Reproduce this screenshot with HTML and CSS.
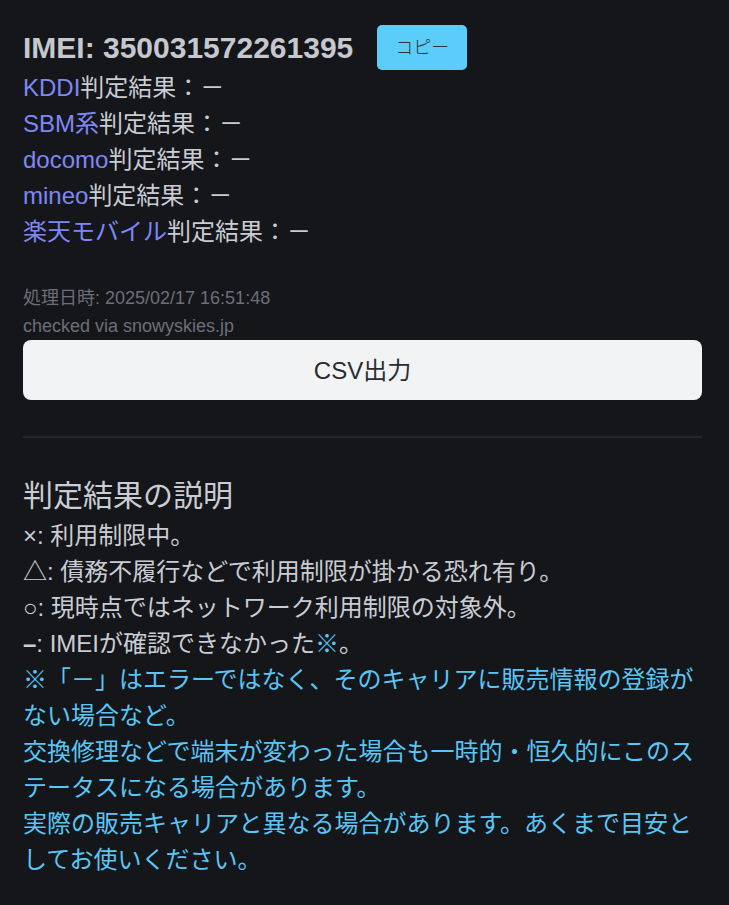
FILE: index.html
```html
<!DOCTYPE html>
<html lang="ja">
<head>
<meta charset="utf-8">
<title>IMEI判定結果</title>
<link rel="stylesheet" href="styles.css">
</head>
<body>
<main class="page">
  <div class="imei-row">
    <h1 class="imei">IMEI: 350031572261395</h1>
    <button class="copy" type="button">コピー</button>
  </div>
  <div class="results">
    <div class="line"><a class="carrier" href="#">KDDI</a>判定結果：－</div>
    <div class="line"><a class="carrier" href="#">SBM系</a>判定結果：－</div>
    <div class="line"><a class="carrier" href="#">docomo</a>判定結果：－</div>
    <div class="line"><a class="carrier" href="#">mineo</a>判定結果：－</div>
    <div class="line"><a class="carrier" href="#">楽天モバイル</a>判定結果：－</div>
  </div>
  <div class="meta">
    <div>処理日時: 2025/02/17 16:51:48</div>
    <div>checked via snowyskies.jp</div>
  </div>
  <button class="csv" type="button">CSV出力</button>
  <hr class="divider">
  <section class="explain">
    <h2 class="explain-title">判定結果の説明</h2>
    <div class="line">×: 利用制限中。</div>
    <div class="line">△: 債務不履行などで利用制限が掛かる恐れ有り。</div>
    <div class="line">○: 現時点ではネットワーク利用制限の対象外。</div>
    <div class="line"><span class="dash">–</span>: IMEIが確認できなかった<span class="note-mark">※</span>。</div>
    <p class="note">※「－」はエラーではなく、そのキャリアに販売情報の登録がない場合など。<br>交換修理などで端末が変わった場合も一時的・恒久的にこのステータスになる場合があります。<br>実際の販売キャリアと異なる場合があります。あくまで目安としてお使いください。</p>
  </section>
</main>
</body>
</html>
```

FILE: styles.css
```css
html, body {
  margin: 0;
  padding: 0;
  background: #15161a;
}

body {
  font-family: "Liberation Sans", Arial, "Noto Sans CJK JP", sans-serif;
  color: #c9cdd3;
}

.page {
  padding: 25px 27px 40px 23px;
}

.imei-row {
  display: flex;
  align-items: center;
  gap: 24px;
  height: 45px;
}

.imei {
  margin: 0;
  font-size: 30px;
  font-weight: bold;
  line-height: 45px;
  color: #c5c9cf;
}

.copy {
  width: 90px;
  height: 45px;
  border: none;
  border-radius: 5px;
  background: #5ccdfb;
  color: #2a3440;
  font-family: "Noto Sans CJK JP", sans-serif;
  font-size: 18px;
  font-weight: 300;
  padding: 0 0 4px;
}

.results .line,
.explain .line {
  font-size: 24px;
  line-height: 36px;
}

.carrier {
  color: #7f87f6;
  text-decoration: none;
}

.dash {
  font-weight: bold;
}

.meta {
  margin-top: 34px;
  font-size: 18px;
  line-height: 28px;
  color: #6b6f78;
}

.csv {
  display: block;
  width: 100%;
  height: 60px;
  border: none;
  border-radius: 8px;
  background: #f2f3f5;
  color: #2a2c30;
  font-family: "Liberation Sans", Arial, "Noto Sans CJK JP", sans-serif;
  font-size: 24px;
  padding: 0 0 4px;
}

.divider {
  margin: 36px 0 35px;
  border: none;
  height: 2px;
  background: #24262b;
}

.explain-title {
  margin: 0;
  font-size: 30px;
  font-weight: normal;
  line-height: 45px;
  color: #c9cdd3;
}

.note-mark {
  color: #5ac6f5;
}

.note {
  margin: 0;
  font-size: 24px;
  line-height: 36px;
  color: #5ac6f5;
}
```
